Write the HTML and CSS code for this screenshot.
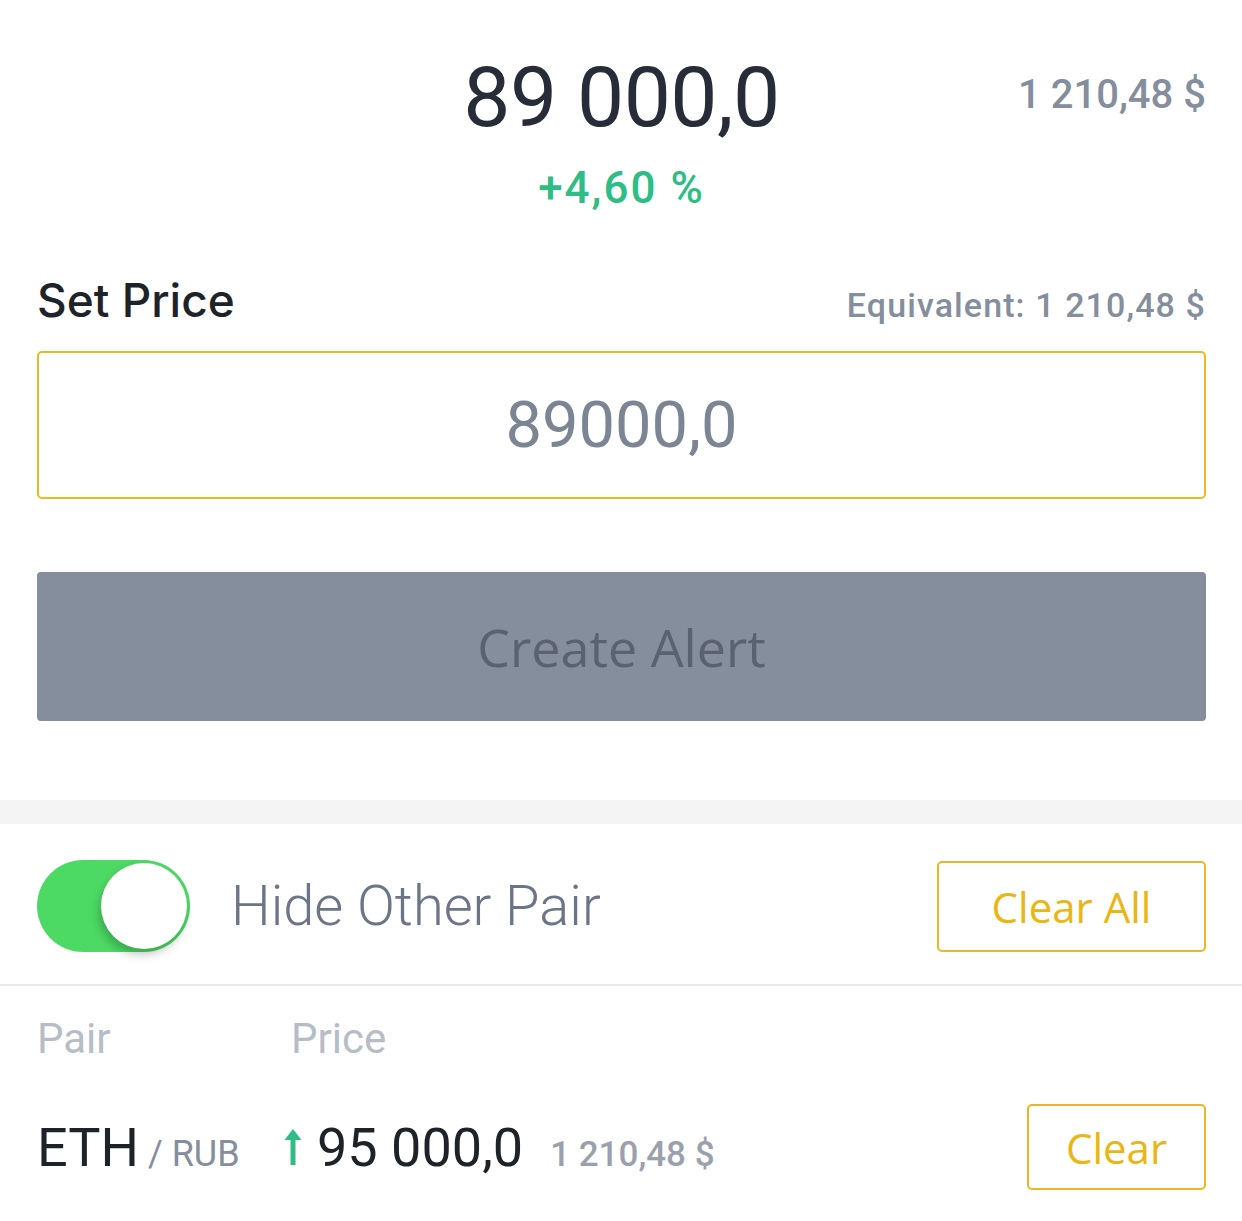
FILE: index.html
```html
<!DOCTYPE html>
<html>
<head>
<meta charset="utf-8">
<link rel="stylesheet" href="styles.css">
</head>
<body>
<div class="page">
  <section class="ticker">
    <div class="ticker-spacer"></div>
    <div class="ticker-main">
      <div class="ticker-price">89 000,0</div>
      <div class="ticker-change">+4,60 %</div>
    </div>
    <div class="ticker-usd">1 210,48 $</div>
  </section>

  <section class="form">
    <div class="form-head">
      <div class="form-title">Set Price</div>
      <div class="form-equiv">Equivalent: 1 210,48 $</div>
    </div>
    <div class="price-input">89000,0</div>
    <div class="create-btn">Create Alert</div>
  </section>
</div>

<div class="band"></div>

<div class="page">
  <section class="controls">
    <div class="toggle"><div class="knob"></div></div>
    <div class="toggle-label">Hide Other Pair</div>
    <div class="outline-btn clear-all">Clear All</div>
  </section>
</div>
<div class="divider"></div>
<div class="page">
  <section class="table-head">
    <div class="col-pair">Pair</div>
    <div class="col-price">Price</div>
  </section>
  <section class="alert-row">
    <div class="pair"><span class="base">ETH</span><span class="quote"> / RUB</span></div>
    <div class="row-price">
      <svg class="arrow" width="18" height="36" viewBox="0 0 18 36"><path d="M9 0 L17.5 11 L11.5 11 L11.5 36 L6.5 36 L6.5 11 L0.5 11 Z" fill="#2EBD85"/></svg>
      <span class="row-value">95 000,0</span>
      <span class="row-usd">1 210,48 $</span>
    </div>
    <div class="outline-btn clear">Clear</div>
  </section>
</div>
</body>
</html>
```

FILE: styles.css
```css
html, body {
  margin: 0;
  padding: 0;
  background: #ffffff;
}
body {
  font-family: Roboto, "Liberation Sans", sans-serif;
  color: #1E2329;
  width: 1242px;
  height: 1221px;
  overflow: hidden;
}
.page {
  padding: 0 36px 0 37px;
}
.ticker {
  display: grid;
  grid-template-columns: 1fr auto 1fr;
  padding-top: 48px;
}
.ticker-main {
  display: flex;
  flex-direction: column;
  align-items: center;
}
.ticker-price {
  font-size: 84px;
  line-height: 100px;
  font-weight: 400;
  color: #262D38;
  letter-spacing: -0.5px;
}
.ticker-change {
  font-size: 44px;
  line-height: 60px;
  font-weight: 500;
  color: #2EBD85;
  margin-top: 10px;
  letter-spacing: 2px;
}
.ticker-usd {
  justify-self: end;
  font-size: 40px;
  line-height: 50px;
  font-weight: 500;
  color: #858E9C;
  margin-top: 22px;
}
.form {
  padding-top: 54px;
}
.form-head {
  display: flex;
  justify-content: space-between;
  align-items: baseline;
}
.form-title {
  font-family: Inter, Roboto, sans-serif;
  font-size: 46px;
  line-height: 56px;
  font-weight: 500;
  color: #1E2329;
}
.form-equiv {
  font-size: 34px;
  font-weight: 500;
  color: #858E9C;
  letter-spacing: 1.1px;
}
.price-input {
  margin-top: 23px;
  height: 144px;
  border: 2px solid #E9B923;
  border-radius: 5px;
  display: flex;
  align-items: center;
  justify-content: center;
  font-size: 65px;
  color: #7B8594;
}
.create-btn {
  margin-top: 73px;
  height: 149px;
  border-radius: 4px;
  background: #858E9C;
  display: flex;
  align-items: center;
  justify-content: center;
  font-family: "Open Sans", Roboto, sans-serif;
  font-size: 52px;
  color: #5A6270;
}
.band {
  margin-top: 79px;
  height: 24px;
  background: #F4F4F5;
}
.controls {
  display: flex;
  align-items: center;
  padding-top: 36px;
  padding-bottom: 32px;
}
.toggle {
  width: 153px;
  height: 92px;
  border-radius: 46px;
  background: #4CD964;
  position: relative;
  flex: none;
}
.knob {
  position: absolute;
  top: 3px;
  right: 3px;
  width: 86px;
  height: 86px;
  border-radius: 50%;
  background: #ffffff;
  box-shadow: -2px 6px 10px rgba(0,0,0,0.22);
}
.toggle-label {
  margin-left: 41px;
  font-size: 56px;
  font-weight: 300;
  color: #6B7587;
  flex: 1;
}
.outline-btn {
  border: 2px solid #E9B923;
  border-radius: 5px;
  display: flex;
  align-items: center;
  justify-content: center;
  color: #EAB613;
  font-family: "Open Sans", Roboto, sans-serif;
  font-weight: 400;
  box-sizing: border-box;
}
.clear-all {
  width: 269px;
  height: 91px;
  font-size: 42px;
}
.divider {
  height: 2px;
  background: #E8EAED;
}
.table-head {
  display: flex;
  padding-top: 28px;
  font-size: 42px;
  color: #B7BDC6;
  font-weight: 400;
}
.col-pair {
  width: 254px;
}
.alert-row {
  display: flex;
  align-items: center;
  margin-top: 41px;
}
.pair {
  width: 247px;
}
.base {
  font-size: 54px;
  color: #1E2329;
}
.quote {
  font-size: 36px;
  color: #858E9C;
}
.row-price {
  flex: 1;
  display: flex;
  align-items: baseline;
}
.arrow {
  align-self: center;
  margin-right: 15px;
}
.row-value {
  font-size: 54px;
  color: #1E2329;
}
.row-usd {
  margin-left: 27px;
  font-size: 35px;
  font-weight: 500;
  color: #9AA1AC;
}
.clear {
  width: 179px;
  height: 86px;
  font-size: 42px;
}
```
